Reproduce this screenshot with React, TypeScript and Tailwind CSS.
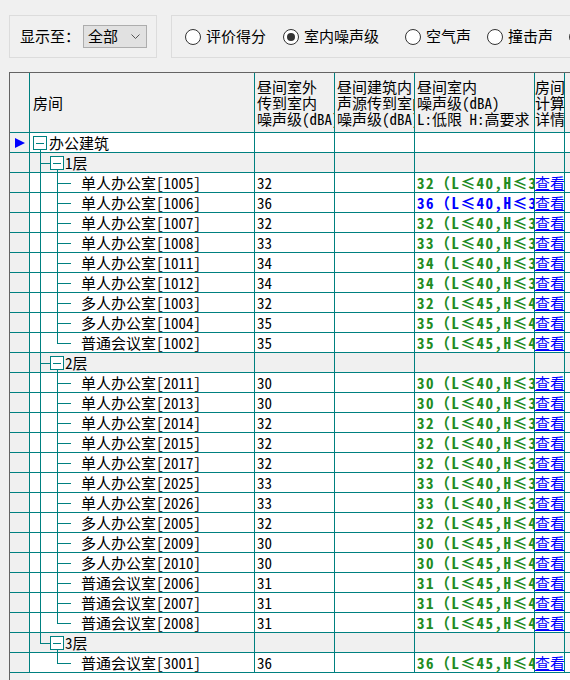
import React from 'react';

type Room = { name: string; v: number; kind: 's' | 'm' | 'c'; warn?: boolean };

const FLOORS: { name: string; rooms: Room[] }[] = [
  {
    name: '1层',
    rooms: [
      { name: '单人办公室[1005]', v: 32, kind: 's' },
      { name: '单人办公室[1006]', v: 36, kind: 's', warn: true },
      { name: '单人办公室[1007]', v: 32, kind: 's' },
      { name: '单人办公室[1008]', v: 33, kind: 's' },
      { name: '单人办公室[1011]', v: 34, kind: 's' },
      { name: '单人办公室[1012]', v: 34, kind: 's' },
      { name: '多人办公室[1003]', v: 32, kind: 'm' },
      { name: '多人办公室[1004]', v: 35, kind: 'm' },
      { name: '普通会议室[1002]', v: 35, kind: 'c' },
    ],
  },
  {
    name: '2层',
    rooms: [
      { name: '单人办公室[2011]', v: 30, kind: 's' },
      { name: '单人办公室[2013]', v: 30, kind: 's' },
      { name: '单人办公室[2014]', v: 32, kind: 's' },
      { name: '单人办公室[2015]', v: 32, kind: 's' },
      { name: '单人办公室[2017]', v: 32, kind: 's' },
      { name: '单人办公室[2025]', v: 33, kind: 's' },
      { name: '单人办公室[2026]', v: 33, kind: 's' },
      { name: '多人办公室[2005]', v: 32, kind: 'm' },
      { name: '多人办公室[2009]', v: 30, kind: 'm' },
      { name: '多人办公室[2010]', v: 30, kind: 'm' },
      { name: '普通会议室[2006]', v: 31, kind: 'c' },
      { name: '普通会议室[2007]', v: 31, kind: 'c' },
      { name: '普通会议室[2008]', v: 31, kind: 'c' },
    ],
  },
  {
    name: '3层',
    rooms: [{ name: '普通会议室[3001]', v: 36, kind: 'c' }],
  },
];

// low / high limits per room kind
const LIMITS = { s: [40, 35], m: [45, 40], c: [45, 40] };

const TEAL = '#008080';

function Radio({ label, checked, width }: { label: string; checked?: boolean; width: string }) {
  return (
    <div className={`flex shrink-0 items-center gap-[5px] ${width}`}>
      <span className="flex size-[16px] shrink-0 items-center justify-center rounded-full border border-[#333333] bg-white">
        {checked && <span className="size-[8px] rounded-full bg-[#333333]" />}
      </span>
      <span className="whitespace-nowrap">{label}</span>
    </div>
  );
}

function MinusBox({ x }: { x: number }) {
  return (
    <>
      <rect x={x + 0.5} y={3.5} width={13} height={13} fill="white" stroke={TEAL} />
      <line x1={x + 3} y1={10} x2={x + 11} y2={10} stroke={TEAL} />
    </>
  );
}

function RootTree() {
  return (
    <svg width="19" height="19" className="shrink-0" shapeRendering="crispEdges">
      <line x1={10.5} y1={17} x2={10.5} y2={19} stroke={TEAL} />
      <MinusBox x={3} />
    </svg>
  );
}

function FloorTree({ last }: { last: boolean }) {
  return (
    <svg width="35" height="19" className="shrink-0" shapeRendering="crispEdges">
      <line x1={10.5} y1={0} x2={10.5} y2={last ? 10.5 : 19} stroke={TEAL} />
      <line x1={10} y1={10.5} x2={20} y2={10.5} stroke={TEAL} />
      <line x1={27.5} y1={17} x2={27.5} y2={19} stroke={TEAL} />
      <MinusBox x={20} />
    </svg>
  );
}

function RoomTree({ floorLast, last }: { floorLast: boolean; last: boolean }) {
  return (
    <svg width="51" height="19" className="shrink-0" shapeRendering="crispEdges">
      {!floorLast && <line x1={10.5} y1={0} x2={10.5} y2={19} stroke={TEAL} />}
      <line x1={27.5} y1={0} x2={27.5} y2={last ? 10.5 : 19} stroke={TEAL} />
      <line x1={27} y1={10.5} x2={41} y2={10.5} stroke={TEAL} />
    </svg>
  );
}

function Le() {
  return <span className="inline-block w-[16px] text-center">≤</span>;
}

function Row({
  gray,
  marker,
  tree,
  name,
  v,
  limits,
  warn,
}: {
  gray?: boolean;
  marker?: boolean;
  tree: React.ReactNode;
  name: string;
  v?: number;
  limits?: number[];
  warn?: boolean;
}) {
  const cell = `h-full shrink-0 overflow-hidden whitespace-nowrap border-r border-[#008080] ${gray ? 'bg-[#f0f0f0]' : 'bg-white'}`;
  return (
    <div className="flex h-[20px] shrink-0 border-b border-[#008080] leading-[19px]">
      <div className="flex h-full w-[20px] shrink-0 items-center justify-center border-r border-[#008080] bg-[#f0f0f0]">
        {marker && (
          <svg width="10" height="10" viewBox="0 0 10 10">
            <polygon points="0,0 10,5 0,10" fill="#0000ff" />
          </svg>
        )}
      </div>
      <div className={`${cell} flex w-[225px] items-center`}>
        {tree}
        <span>{name}</span>
      </div>
      <div className={`${cell} w-[80px] pl-[2px]`}>{v}</div>
      <div className={`${cell} w-[80px]`} />
      <div
        className={`${cell} w-[120px] pl-[2px] font-bold tracking-[1.5px] ${warn ? 'text-[#0000ff]' : 'text-[#228b22]'}`}
      >
        {limits && (
          <>
            {v}（L<Le />
            {limits[0]},H<Le />
            {limits[1]}）
          </>
        )}
      </div>
      <div className={`${cell} w-[30px] text-[#0000ff] underline`}>{limits ? '查看' : ''}</div>
      <div className={`h-full flex-1 ${gray ? 'bg-[#f0f0f0]' : 'bg-white'}`} />
    </div>
  );
}

export default function App() {
  return (
    <div className="flex h-[680px] w-[570px] flex-col overflow-hidden bg-[#f0f0f0] pt-[15px] pl-[9px] font-['Noto_Sans_Mono_CJK_SC','Noto_Sans_CJK_SC',sans-serif] text-[15px] text-black">
      {/* Top filters */}
      <div className="flex shrink-0 items-start">
        <div className="flex h-[43px] w-[148px] shrink-0 items-center border border-[#dcdcdc] pl-[10px]">
          <span className="w-[63px] whitespace-nowrap">显示至：</span>
          <div className="flex h-[23px] w-[64px] items-center justify-between border border-[#adadad] bg-[#e1e1e1] pr-[6px] pl-[4px]">
            <span>全部</span>
            <svg width="9" height="6" viewBox="0 0 9 6">
              <polyline points="0.5,0.5 4.5,4.5 8.5,0.5" fill="none" stroke="#555" />
            </svg>
          </div>
        </div>
        <div className="ml-[14px] flex h-[43px] w-[440px] shrink-0 items-center overflow-hidden border border-[#dcdcdc] pl-[13px]">
          <Radio label="评价得分" width="w-[98px]" />
          <Radio label="室内噪声级" checked width="w-[122px]" />
          <Radio label="空气声" width="w-[82px]" />
          <Radio label="撞击声" width="w-[82px]" />
          <Radio label="楼板" width="w-[60px]" />
        </div>
      </div>

      {/* Grid */}
      <div className="mt-[14px] flex flex-1 flex-col border-t border-l border-[#646464] bg-white">
        <div className="flex h-[60px] shrink-0 border-b border-[#008080] bg-[#f0f0f0] leading-[16px]">
          <div className="h-full w-[20px] shrink-0 border-r border-[#008080]" />
          <div className="flex h-full w-[225px] shrink-0 items-center border-r border-[#008080] pl-[3px]">
            房间
          </div>
          <div className="flex h-full w-[80px] shrink-0 flex-col justify-center overflow-hidden border-r border-[#008080] pt-[1px] pl-[2px] whitespace-nowrap">
            <span>昼间室外</span>
            <span>传到室内</span>
            <span>噪声级(dBA)</span>
          </div>
          <div className="flex h-full w-[80px] shrink-0 flex-col justify-center overflow-hidden border-r border-[#008080] pt-[1px] pl-[2px] whitespace-nowrap">
            <span>昼间建筑内</span>
            <span>声源传到室内</span>
            <span>噪声级(dBA)</span>
          </div>
          <div className="flex h-full w-[120px] shrink-0 flex-col justify-center overflow-hidden border-r border-[#008080] pt-[1px] pl-[2px] whitespace-nowrap">
            <span>昼间室内</span>
            <span>噪声级(dBA)</span>
            <span>L:低限 H:高要求</span>
          </div>
          <div className="flex h-full w-[30px] shrink-0 flex-col justify-center overflow-hidden border-r border-[#008080] pt-[1px] whitespace-nowrap">
            <span>房间</span>
            <span>计算</span>
            <span>详情</span>
          </div>
          <div className="h-full flex-1" />
        </div>

        <Row marker tree={<RootTree />} name="办公建筑" />
        {FLOORS.map((floor, fi) => {
          const floorLast = fi === FLOORS.length - 1;
          return (
            <React.Fragment key={floor.name}>
              <Row gray tree={<FloorTree last={floorLast} />} name={floor.name} />
              {floor.rooms.map((room, ri) => (
                <Row
                  key={room.name}
                  tree={<RoomTree floorLast={floorLast} last={ri === floor.rooms.length - 1} />}
                  name={room.name}
                  v={room.v}
                  limits={LIMITS[room.kind]}
                  warn={room.warn}
                />
              ))}
            </React.Fragment>
          );
        })}
        <div className="flex flex-1">
          <div className="w-[20px] shrink-0 bg-[#f0f0f0]" />
          <div className="flex-1 bg-white" />
        </div>
      </div>
    </div>
  );
}
